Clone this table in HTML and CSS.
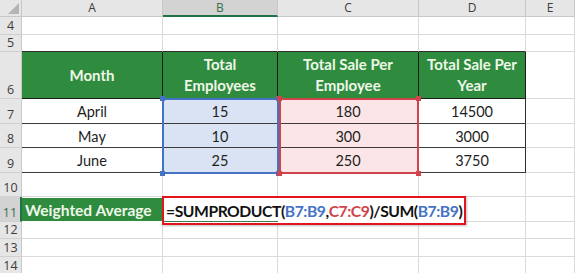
FILE: index.html
```html
<!DOCTYPE html>
<html>
<head>
<meta charset="utf-8">
<link rel="stylesheet" href="styles.css">
</head>
<body>
<div class="sheet">
  <!-- column headers -->
  <div class="corner"><span class="tri"></span></div>
  <div class="ch">A</div>
  <div class="ch ch-sel">B</div>
  <div class="ch">C</div>
  <div class="ch">D</div>
  <div class="ch">E</div>

  <!-- row 4 -->
  <div class="rh">4</div>
  <div class="c"></div><div class="c"></div><div class="c"></div><div class="c"></div><div class="c"></div>

  <!-- row 5 -->
  <div class="rh">5</div>
  <div class="c tb-top"></div><div class="c tb-top"></div><div class="c tb-top"></div><div class="c tb-top"></div><div class="c"></div>

  <!-- row 6: table header -->
  <div class="rh">6</div>
  <div class="c tb head">Month</div>
  <div class="c tb head">Total<br>Employees</div>
  <div class="c tb head">Total Sale Per<br>Employee</div>
  <div class="c tb head">Total Sale Per<br>Year</div>
  <div class="c"></div>

  <!-- rows 7-9: data -->
  <div class="rh">7</div>
  <div class="c tb num">April</div>
  <div class="c tb num fill-b">15</div>
  <div class="c tb num fill-c">180</div>
  <div class="c tb num">14500</div>
  <div class="c"></div>

  <div class="rh">8</div>
  <div class="c tb num">May</div>
  <div class="c tb num fill-b">10</div>
  <div class="c tb num fill-c">300</div>
  <div class="c tb num">3000</div>
  <div class="c"></div>

  <div class="rh">9</div>
  <div class="c tb num">June</div>
  <div class="c tb num fill-b">25</div>
  <div class="c tb num fill-c">250</div>
  <div class="c tb num">3750</div>
  <div class="c"></div>

  <!-- row 10 -->
  <div class="rh">10</div>
  <div class="c"></div><div class="c"></div><div class="c"></div><div class="c"></div><div class="c"></div>

  <!-- row 11 -->
  <div class="rh rh-sel">11</div>
  <div class="c label">Weighted Average</div>
  <div class="c"></div><div class="c"></div><div class="c"></div><div class="c"></div>

  <!-- rows 12-14 -->
  <div class="rh">12</div>
  <div class="c"></div><div class="c"></div><div class="c"></div><div class="c"></div><div class="c"></div>
  <div class="rh">13</div>
  <div class="c"></div><div class="c"></div><div class="c"></div><div class="c"></div><div class="c"></div>
  <div class="rh">14</div>
  <div class="c"></div><div class="c"></div><div class="c"></div><div class="c"></div><div class="c"></div>

  <!-- range highlights referenced by the formula -->
  <div class="range range-b">
    <i class="h tl"></i><i class="h tr"></i><i class="h bl"></i><i class="h br"></i>
  </div>
  <div class="range range-c">
    <i class="h tl"></i><i class="h tr"></i><i class="h bl"></i><i class="h br"></i>
  </div>

  <!-- formula being edited in B11 -->
  <div class="formula">
    <span class="active"></span>
    <span>=SUMPRODUCT(</span><span class="ref-b">B7:B9</span><span>,</span><span class="ref-c">C7:C9</span><span>)/SUM(</span><span class="ref-b">B7:B9</span><span>)</span>
  </div>
</div>
</body>
</html>
```

FILE: styles.css
```css
html, body {
  margin: 0;
  padding: 0;
  background: #ffffff;
  overflow: hidden;
}

.sheet {
  position: relative;
  display: grid;
  grid-template-columns: 22px 141px 115px 141px 107px 49px;
  grid-template-rows: 17px 18px 17px 47px 25px 24px 25px 24px 25px 17px 18px 18px;
  width: 575px;
  height: 273px;
  overflow: hidden;
  font-family: Lato, "Open Sans", sans-serif;
  color: #1e1e1e;
}

.sheet > div {
  box-sizing: border-box;
}

/* headers */
.corner {
  background: #e6e6e6;
  border-right: 1px solid #c8c8c8;
  border-bottom: 1px solid #c8c8c8;
  position: relative;
}
.tri {
  position: absolute;
  right: 2px;
  bottom: 2px;
  width: 0;
  height: 0;
  border-left: 11px solid transparent;
  border-bottom: 11px solid #b4b4b4;
}

.ch {
  background: #e6e6e6;
  border-right: 1px solid #c8c8c8;
  border-bottom: 1px solid #c8c8c8;
  font-family: "Open Sans", sans-serif;
  font-size: 12px;
  color: #3c3c3c;
  display: flex;
  align-items: center;
  justify-content: center;
  line-height: 1;
}
.ch-sel {
  background: #d3d3d3;
  color: #38704a;
  border-bottom: 2px solid #217346;
}

.rh {
  background: #e6e6e6;
  border-right: 1px solid #c8c8c8;
  border-bottom: 1px solid #d0d0d0;
  font-family: "Open Sans", sans-serif;
  font-size: 12.5px;
  color: #3c3c3c;
  display: flex;
  align-items: flex-end;
  justify-content: center;
  padding-bottom: 1px;
  line-height: 15px;
}
.rh-sel {
  background: #d3d3d3;
  color: #38704a;
  border-right: 2px solid #217346;
}

/* cells */
.c {
  border-right: 1px solid #dadada;
  border-bottom: 1px solid #dadada;
}

.tb-top {
  border-bottom-color: #2d2d2d;
}

.tb {
  border-right-color: #2d2d2d;
  border-bottom-color: #3c3c3c;
}

.head {
  background: #2f8c3f;
  color: #eef7e8;
  font-weight: 700;
  font-size: 15px;
  line-height: 21px;
  text-align: center;
  display: flex;
  align-items: center;
  justify-content: center;
  border-right-color: #1b1b1b;
  border-bottom-color: #1b1b1b;
}

.num {
  font-size: 14.5px;
  display: flex;
  align-items: center;
  justify-content: center;
  padding-top: 1px;
}

.fill-b { background: #dae3f3; }
.fill-c { background: #fbe5e6; }

.label {
  background: #2f8c3f;
  background-clip: padding-box;
  color: #eef7e8;
  font-weight: 700;
  font-size: 15.5px;
  display: flex;
  align-items: center;
  padding-left: 3px;
  border-top: 1px solid #ffffff;
  border-right-color: #2f8c3f;
  border-bottom-color: #ffffff;
}

/* referenced ranges, laid over the cells they point at */
.range {
  position: absolute;
  grid-row: 5 / 8;
  top: -1px;
  bottom: -1px;
  box-sizing: border-box;
}
.range-b {
  grid-column: 3 / 4;
  left: -1px;
  right: -1px;
  border: 2px solid #4472c4;
}
.range-c {
  grid-column: 4 / 5;
  left: 1px;
  right: 0;
  border: 2px solid #d0434c;
}

.h {
  position: absolute;
  width: 5px;
  height: 5px;
}
.range-b .h { background: #4472c4; }
.range-c .h { background: #d0434c; }
.tl { left: -4px; top: -4px; }
.tr { right: -4px; top: -4px; }
.bl { left: -4px; bottom: -4px; }
.br { right: -4px; bottom: -4px; }

/* formula in edit mode, laid over B11:D11 */
.formula {
  position: absolute;
  grid-column: 3 / 6;
  grid-row: 9 / 10;
  left: -1px;
  top: -1px;
  bottom: -3px;
  width: 304px;
  box-sizing: border-box;
  border: 2px solid #e3141c;
  box-shadow: 1px 1px 2px rgba(0, 0, 0, 0.25);
  background: #ffffff;
  display: flex;
  align-items: center;
  padding-left: 2px;
  font-weight: 700;
  font-size: 15.7px;
  letter-spacing: -0.45px;
  color: #111111;
  white-space: nowrap;
}
.ref-b { color: #4472c4; }
.ref-c { color: #d0434c; }

.active {
  position: absolute;
  left: 0;
  bottom: 1px;
  width: 114px;
  height: 1px;
  background: #3f7a4c;
}
```
